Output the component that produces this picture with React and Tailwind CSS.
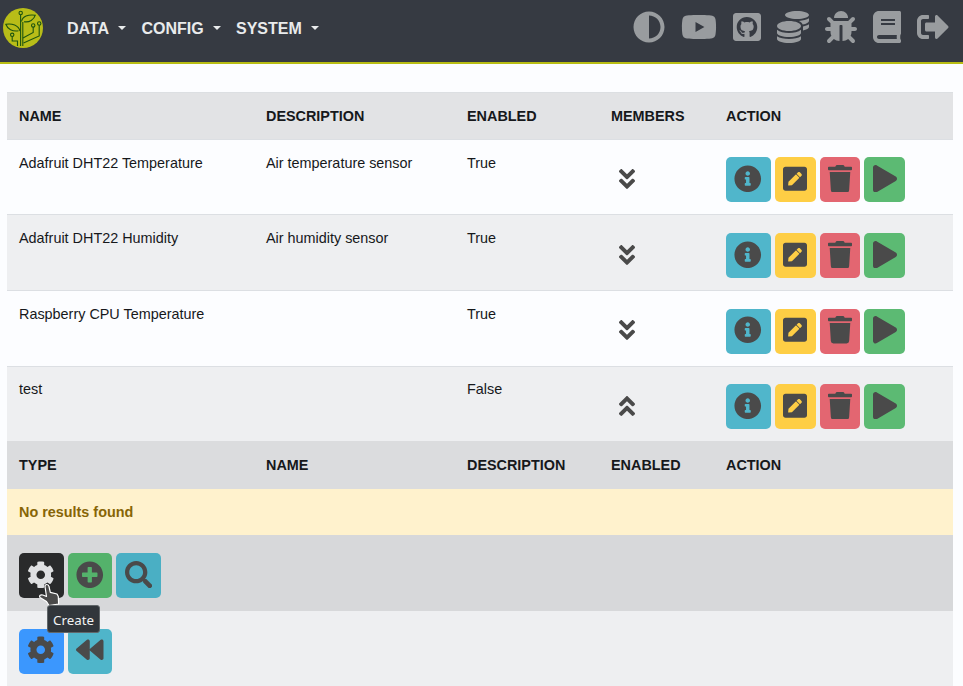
import React from "react";
import {
  FaAdjust, FaYoutube, FaGithubSquare, FaCoins, FaBug, FaBook, FaSignOutAlt,
  FaAngleDoubleDown, FaAngleDoubleUp, FaInfoCircle, FaPenSquare, FaTrash, FaPlay,
  FaCog, FaPlusCircle, FaSearch, FaBackward,
} from "react-icons/fa";

const cols = "grid grid-cols-[247px_201px_144px_115px_1fr] px-3";

function Logo() {
  return (
    <svg className="h-10 w-10" viewBox="0 0 40 40" fill="none" stroke="#1d5410" strokeWidth="1.1">
      <circle cx="20" cy="20" r="20" fill="#b8bd18" stroke="none" />
      <path d="M17.600 38V6.700M19.800 38V14" />
      <circle cx="17.700" cy="5" r="1.700" />
      <path d="M18.500 13.500C19.500 8.500 25 6.200 32.300 7.200 31 11.500 26.500 14.800 21 13.700" />
      <path d="M15.500 22.800C9.500 23.800 4.500 21 2.800 16.300 9 15 15.500 17.500 17 23" />
      <circle cx="9.200" cy="26.800" r="1.700" />
      <path d="M9.200 28.500v4.500h5.300v5" />
      <circle cx="30.200" cy="17.400" r="1.700" />
      <path d="M30.200 19.100v5.400L20 30" />
      <circle cx="36.200" cy="15.500" r="1.700" />
      <path d="M36.200 17.200V28L20.500 35" />
    </svg>
  );
}

function NavItem({ label, className }) {
  return (
    <div className={"flex items-center justify-between pt-[1px] text-[16px] font-bold text-[#e9ebec] " + className}>
      <span>{label}</span>
      <span className="mb-[2px] border-x-[4px] border-t-[4px] border-x-transparent border-t-[#e9ebec]" />
    </div>
  );
}

function Btn({ className, children, pad = "pb-[2px]" }) {
  return (
    <div className={"flex h-[45px] items-center justify-center rounded-[5px] text-[27.500px] text-[#4a4a4a] " + pad + " " + className}>
      {children}
    </div>
  );
}

function Actions({ pad, iconPad }) {
  return (
    <div className={"flex gap-1 " + pad}>
      <Btn pad={iconPad} className="w-[45px] bg-[#50b6cb] pr-[1px]"><FaInfoCircle /></Btn>
      <Btn pad={iconPad} className="w-[41px] bg-[#fece45] pr-[1px]"><FaPenSquare className="w-6" /></Btn>
      <Btn pad={iconPad} className="w-[40px] bg-[#e36671]"><FaTrash className="w-6" /></Btn>
      <Btn pad={iconPad} className="w-[41px] bg-[#5cba73]"><FaPlay className="w-6" /></Btn>
    </div>
  );
}

function Header({ labels, className }) {
  return (
    <div className={cols + " items-center font-bold " + className}>
      {labels.map((l) => <span key={l}>{l}</span>)}
    </div>
  );
}

function Row({ name, desc, enabled, open, className, textPad = "pt-3", iconPad = "pt-[26px]", btnPad = "pt-[18px]", btnIconPad }) {
  const Chevron = open ? FaAngleDoubleUp : FaAngleDoubleDown;
  return (
    <div className={cols + " " + className}>
      <span className={textPad}>{name}</span>
      <span className={textPad}>{desc}</span>
      <span className={textPad}>{enabled}</span>
      <span className={"pl-2 text-[26px] text-[#4a4a4a] " + iconPad}><Chevron className="w-4" /></span>
      <Actions pad={btnPad} iconPad={btnIconPad} />
    </div>
  );
}

export default function App() {
  return (
    <div className="relative h-[686px] w-[963px] overflow-hidden bg-[#fcfdff] font-['Liberation_Sans',Arial,sans-serif] text-[14.400px] leading-[22px] text-[#16181b]">
      <header className="flex h-16 items-start justify-between border-b-2 border-[#b8bd12] bg-[#363a42] pl-[3px] pr-[14px]">
        <div className="flex items-center pt-2">
          <Logo />
          <nav className="flex gap-[15.500px] pl-6">
            <NavItem label="DATA" className="w-[59px]" />
            <NavItem label="CONFIG" className="w-[79px]" />
            <NavItem label="SYSTEM" className="w-[83px]" />
          </nav>
        </div>
        <div className="flex gap-4 pt-[11px] text-[32px] text-[#999c9f]">
          <FaAdjust />
          <FaYoutube className="w-9" />
          <FaGithubSquare className="w-7" />
          <FaCoins />
          <FaBug />
          <FaBook className="w-7" />
          <FaSignOutAlt />
        </div>
      </header>

      <main className="ml-[7px] mt-7 w-[946px]">
        <Header labels={["NAME", "DESCRIPTION", "ENABLED", "MEMBERS", "ACTION"]} className="h-[47px] border-t border-[#dcdfe2] bg-[#e2e3e5]" />
        <Row name="Adafruit DHT22 Temperature" desc="Air temperature sensor" enabled="True" btnPad="pt-[17px]" className="h-[75px] border-t border-[#dcdfe3]" />
        <Row name="Adafruit DHT22 Humidity" desc="Air humidity sensor" enabled="True" iconPad="pt-[27px]" className="h-[76px] border-t border-[#dcdfe3] bg-[#eeeff1]" />
        <Row name="Raspberry CPU Temperature" enabled="True" btnIconPad="pb-[3px]" className="h-[76px] border-t border-[#dcdfe3]" />
        <Row name="test" enabled="False" open textPad="pt-[11px]" btnPad="pt-[17px]" className="h-[75px] border-t border-[#dcdfe3] bg-[#eeeff1]" />
        <Header labels={["TYPE", "NAME", "DESCRIPTION", "ENABLED", "ACTION"]} className="h-12 bg-[#dbdcde]" />
        <div className="flex h-[46px] items-center bg-[#fff2cd] px-3 font-bold text-[#876506]">No results found</div>
        <div className="flex h-[76px] gap-1 bg-[#d7d8da] px-3 pt-[18px]">
          <Btn className="w-[45px] bg-[#292a2b] pr-[1px]"><FaCog className="text-[#dfe0e2]" /></Btn>
          <Btn className="w-[44px] bg-[#54b26b]"><FaPlusCircle /></Btn>
          <Btn className="w-[45px] bg-[#4aafc4]"><FaSearch /></Btn>
        </div>
        <div className="flex h-[76px] gap-1 bg-[#eeeff1] px-3 pt-[18px]">
          <Btn pad="pb-[3px]" className="w-[45px] bg-[#3b97fe] pr-[1px]"><FaCog /></Btn>
          <Btn pad="pb-[3px]" className="w-[44px] bg-[#4fb5ca]"><FaBackward /></Btn>
        </div>
      </main>

      <svg className="absolute left-[38px] top-[583px] h-[23px] w-[22px]" viewBox="0 0 22 23" fill="#4a4a4a" stroke="#fff" strokeWidth="1.200" strokeLinejoin="round">
        <path d="M7 3.500C7 .8 10.500 .8 11 3.500L12.300 9.300 19 11l1.300 2.500.3 7.500L11 22.500l-2.500-4-6.500-4C.8 12.500 2.800 11.300 4.800 12L8.500 13.500Z" />
      </svg>
      <div className="absolute left-[47px] top-[605px] flex h-7 w-[53px] items-center justify-center rounded-[3px] border border-[#61676a] bg-[#31363b] pt-[1px] font-['Noto_Sans',sans-serif] text-[13.300px] text-[#f2f3f3]">Create</div>
    </div>
  );
}
